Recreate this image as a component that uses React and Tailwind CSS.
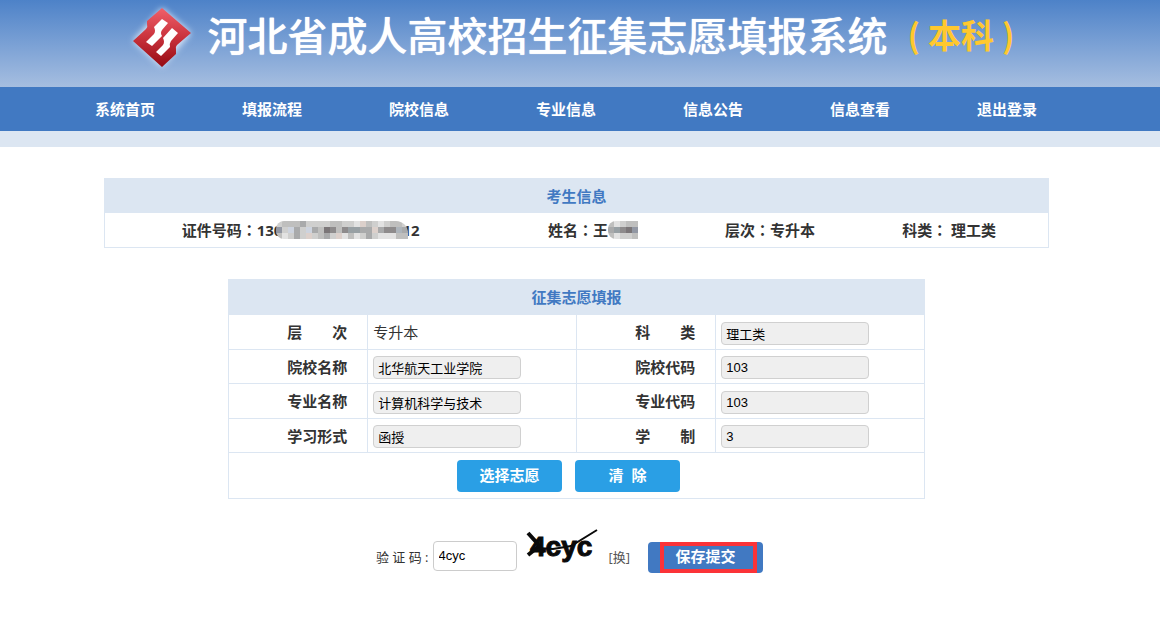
const NAV = ["系统首页", "填报流程", "院校信息", "专业信息", "信息公告", "信息查看", "退出登录"];

const ROWS = [
  { left: "层\u3000\u3000次", leftText: "专升本", right: "科\u3000\u3000类", rightValue: "理工类" },
  { left: "院校名称", leftValue: "北华航天工业学院", right: "院校代码", rightValue: "103" },
  { left: "专业名称", leftValue: "计算机科学与技术", right: "专业代码", rightValue: "103" },
  { left: "学习形式", leftValue: "函授", right: "学\u3000\u3000制", rightValue: "3" },
];

// each string is one row of the mosaic, every character picks a shade
const SHADES = {
  a: "#e2e2e2",
  b: "#cfcfce",
  c: "#bfbfbe",
  d: "#a9aaab",
  e: "#8e8b8c",
  f: "#7b7678",
  g: "#cdd3de",
  h: "#9297a3",
  i: "#dcd0cb",
  j: "#adb4bb",
  k: "#98a0a4",
};

const ID_MOSAIC = [
  "bcccdbbbbccbbaicbabccb",
  "hbgdbgdcfecekkddideejd",
  "cabdbibcdbiacabdbaaacc",
];
const NAME_MOSAIC = ["cabcc", "dkefh", "cabbc"];

function Mosaic({ rows, square }) {
  const width = rows[0].length * 6;
  return (
    <svg
      className={`relative inline-block align-middle ${square ? "rounded-l-lg" : "rounded-l-lg rounded-tr-xl"}`}
      width={width}
      height="18"
      viewBox={`0 0 ${width} 18`}
      aria-hidden="true"
    >
      {rows.map((row, y) =>
        row.split("").map((c, x) => (
          <rect key={`${x}-${y}`} x={x * 6} y={y * 6} width="6" height="6" fill={SHADES[c]} />
        ))
      )}
    </svg>
  );
}

function Logo() {
  return (
    <svg className="shrink-0" width="76" height="76" viewBox="0 0 76 76" aria-hidden="true">
      <defs>
        <linearGradient id="logoRed" x1="0" y1="0" x2="0" y2="1">
          <stop offset="0" stopColor="#f0606a" />
          <stop offset="0.5" stopColor="#c9323c" />
          <stop offset="1" stopColor="#950a12" />
        </linearGradient>
        <filter id="logoGlow" x="-20%" y="-20%" width="140%" height="140%">
          <feGaussianBlur stdDeviation="3" />
        </filter>
      </defs>
      <path d="M38 8 L67 33 L38 67 L9 41 Z" fill="#dbe8f8" filter="url(#logoGlow)" />
      <path
        d="M38 8 L67 33 L53 45 Q51 47 52 50 L52 54 L38 67 L9 41 L22 29 Q24 27 23 24 L23 21 Z"
        fill="url(#logoRed)"
      />
      <path d="M38 19 L44 23 L38 30 Q36 33 38 36 L28 46 L22 42 L30 34 Q32 31 30 27 Z" fill="#fff" />
      <path d="M48 28 L54 33 L47 41 Q45 44 46 47 L37 56 L32 52 L39 45 Q41 42 39 38 Z" fill="#fff" />
    </svg>
  );
}

function Captcha() {
  return (
    <svg width="78" height="38" viewBox="0 0 78 38" role="img" aria-label="验证码图片">
      <text
        x="7"
        y="29"
        fontSize="28"
        fontWeight="bold"
        fontFamily="'Liberation Sans', Arial, sans-serif"
        fill="#0a0a0a"
        stroke="#0a0a0a"
      >
        4cyc
      </text>
      <path d="M5 6 L14 16 L20 26" stroke="#0a0a0a" strokeWidth="4" fill="none" />
      <path d="M5 28 L15 20" stroke="#0a0a0a" strokeWidth="4" fill="none" />
      <path d="M15 21 L30 22 L48 19 L74 3" stroke="#0a0a0a" strokeWidth="2" fill="none" />
    </svg>
  );
}

// full-width colon centred in its box
function Colon() {
  return <span className="font-['Noto_Sans_CJK_TC',sans-serif]">：</span>;
}

function ReadonlyField({ id, value }) {
  return (
    <input
      id={id}
      type="text"
      readOnly
      defaultValue={value}
      className="block h-[23px] w-[148px] rounded border border-[#d0d0d0] bg-[#efefef] px-1 font-['Liberation_Sans','Noto_Sans_CJK_SC',sans-serif] text-[13px] leading-4 text-black"
    />
  );
}

function FormRow({ row, index }) {
  const label = "border border-[#dce6f2] pr-5 text-right font-bold";
  const cell = "border border-[#dce6f2] px-[5px]";
  return (
    <tr className={index % 2 === 0 ? "h-[35px]" : "h-[34px]"}>
      <th scope="row" className={label}>
        {row.leftValue ? <label htmlFor={`left-${index}`}>{row.left}</label> : row.left}
      </th>
      <td className={row.leftValue ? `${cell} pt-0.5` : cell}>
        {row.leftValue ? <ReadonlyField id={`left-${index}`} value={row.leftValue} /> : row.leftText}
      </td>
      <th scope="row" className={label}>
        <label htmlFor={`right-${index}`}>{row.right}</label>
      </th>
      <td className={`${cell} pt-0.5`}>
        <ReadonlyField id={`right-${index}`} value={row.rightValue} />
      </td>
    </tr>
  );
}

export default function App() {
  return (
    <div className="bg-white font-['Open_Sans','Noto_Sans_CJK_SC',sans-serif] text-[15px] leading-5 text-[#333]">
      <header className="flex h-[87px] items-start justify-center bg-linear-to-b from-[#4d82c8] to-[#a6bee0] pr-[22px]">
        <Logo />
        <h1 className="flex items-center pt-1 pl-2 font-['Noto_Sans_CJK_SC',sans-serif] text-[40px] leading-[60px] font-medium whitespace-nowrap text-white text-shadow-[0_0_1px_#ffffff]">
          河北省成人高校招生征集志愿填报系统
          <span className="flex gap-2 pl-5 text-[33px] font-bold text-[#ffc82e] text-shadow-none">
            <span>(</span>本科<span>)</span>
          </span>
        </h1>
      </header>

      <nav className="h-11 bg-[#4179c2] pr-7">
        <ul className="mx-auto flex h-full max-w-[1029px] items-center">
          {NAV.map((item) => (
            <li key={item} className="flex-1 text-center">
              <a href="#" className="font-bold text-white">
                {item}
              </a>
            </li>
          ))}
        </ul>
      </nav>
      <div className="h-4 bg-[#dce6f2]" />

      <main className="pt-[31px] pr-[7px] pb-10">
        <table className="mx-auto w-full max-w-[945px] table-fixed border-collapse border border-[#dce6f2] font-bold">
          <colgroup>
            <col className="w-[41.5%]" />
            <col className="w-[20.5%]" />
            <col className="w-[17%]" />
            <col className="w-[21%]" />
          </colgroup>
          <thead>
            <tr>
              <th colSpan={4} className="h-[34px] bg-[#dce6f2] text-[#4179c2]">
                考生信息
              </th>
            </tr>
          </thead>
          <tbody>
            <tr>
              <td className="h-[35px] text-center whitespace-nowrap">
                <span className="inline-flex items-center">
                  证件号码
                  <Colon />
                  130
                  <span className="-mx-1.5 flex">
                    <Mosaic rows={ID_MOSAIC} />
                  </span>
                  12
                </span>
              </td>
              <td className="text-center whitespace-nowrap">
                <span className="inline-flex items-center">
                  姓名
                  <Colon />王
                  <Mosaic rows={NAME_MOSAIC} square />
                </span>
              </td>
              <td className="text-center">
                层次
                <Colon />
                专升本
              </td>
              <td className="text-center">
                科类
                <Colon /> 理工类
              </td>
            </tr>
          </tbody>
        </table>

        <form onSubmit={(e) => e.preventDefault()}>
          <table className="mx-auto mt-[31px] w-full max-w-[697px] table-fixed border-collapse border border-[#dce6f2]">
            <colgroup>
              <col className="w-[20%]" />
              <col className="w-[30%]" />
              <col className="w-[20%]" />
              <col className="w-[30%]" />
            </colgroup>
            <thead>
              <tr>
                <th colSpan={4} className="h-[35px] bg-[#dce6f2] font-bold text-[#4179c2]">
                  征集志愿填报
                </th>
              </tr>
            </thead>
            <tbody>
              {ROWS.map((row, i) => (
                <FormRow key={i} row={row} index={i} />
              ))}
              <tr>
                <td colSpan={4} className="h-[46px] border border-[#dce6f2]">
                  <div className="flex justify-center gap-[13px] pr-4">
                    <button type="button" className="h-8 w-[105px] rounded bg-[#2a9fe5] pb-0.5 font-bold text-white">
                      选择志愿
                    </button>
                    <button
                      type="button"
                      className="h-8 w-[105px] rounded bg-[#2a9fe5] pb-0.5 font-bold whitespace-pre text-white"
                    >
                      {"清  除"}
                    </button>
                  </div>
                </td>
              </tr>
            </tbody>
          </table>

          <div className="mt-7 flex items-start justify-center pr-3.5">
            <label htmlFor="captcha" className="pt-5 text-[13px]">
              验 证 码 :
            </label>
            <input
              id="captcha"
              type="text"
              defaultValue="4cyc"
              autoFocus
              className="mt-3.5 ml-1 h-[30px] w-[84px] rounded border border-[#ccc] bg-white px-[5px] pb-0.5 font-['Liberation_Sans',sans-serif] text-[13px] text-black outline-none"
            />
            <span className="ml-1.5">
              <Captcha />
            </span>
            <a href="#" className="ml-2 pt-5 text-[13px] text-[#555]">
              [换]
            </a>
            <button
              type="submit"
              className="relative mt-[15px] ml-[18px] h-[31px] w-[115px] rounded bg-[#4179c2] pb-1 font-bold text-white"
            >
              保存提交
              <span className="absolute inset-y-0 right-1.5 left-3 border-4 border-[#fb3338]" />
            </button>
          </div>
        </form>
      </main>
    </div>
  );
}
